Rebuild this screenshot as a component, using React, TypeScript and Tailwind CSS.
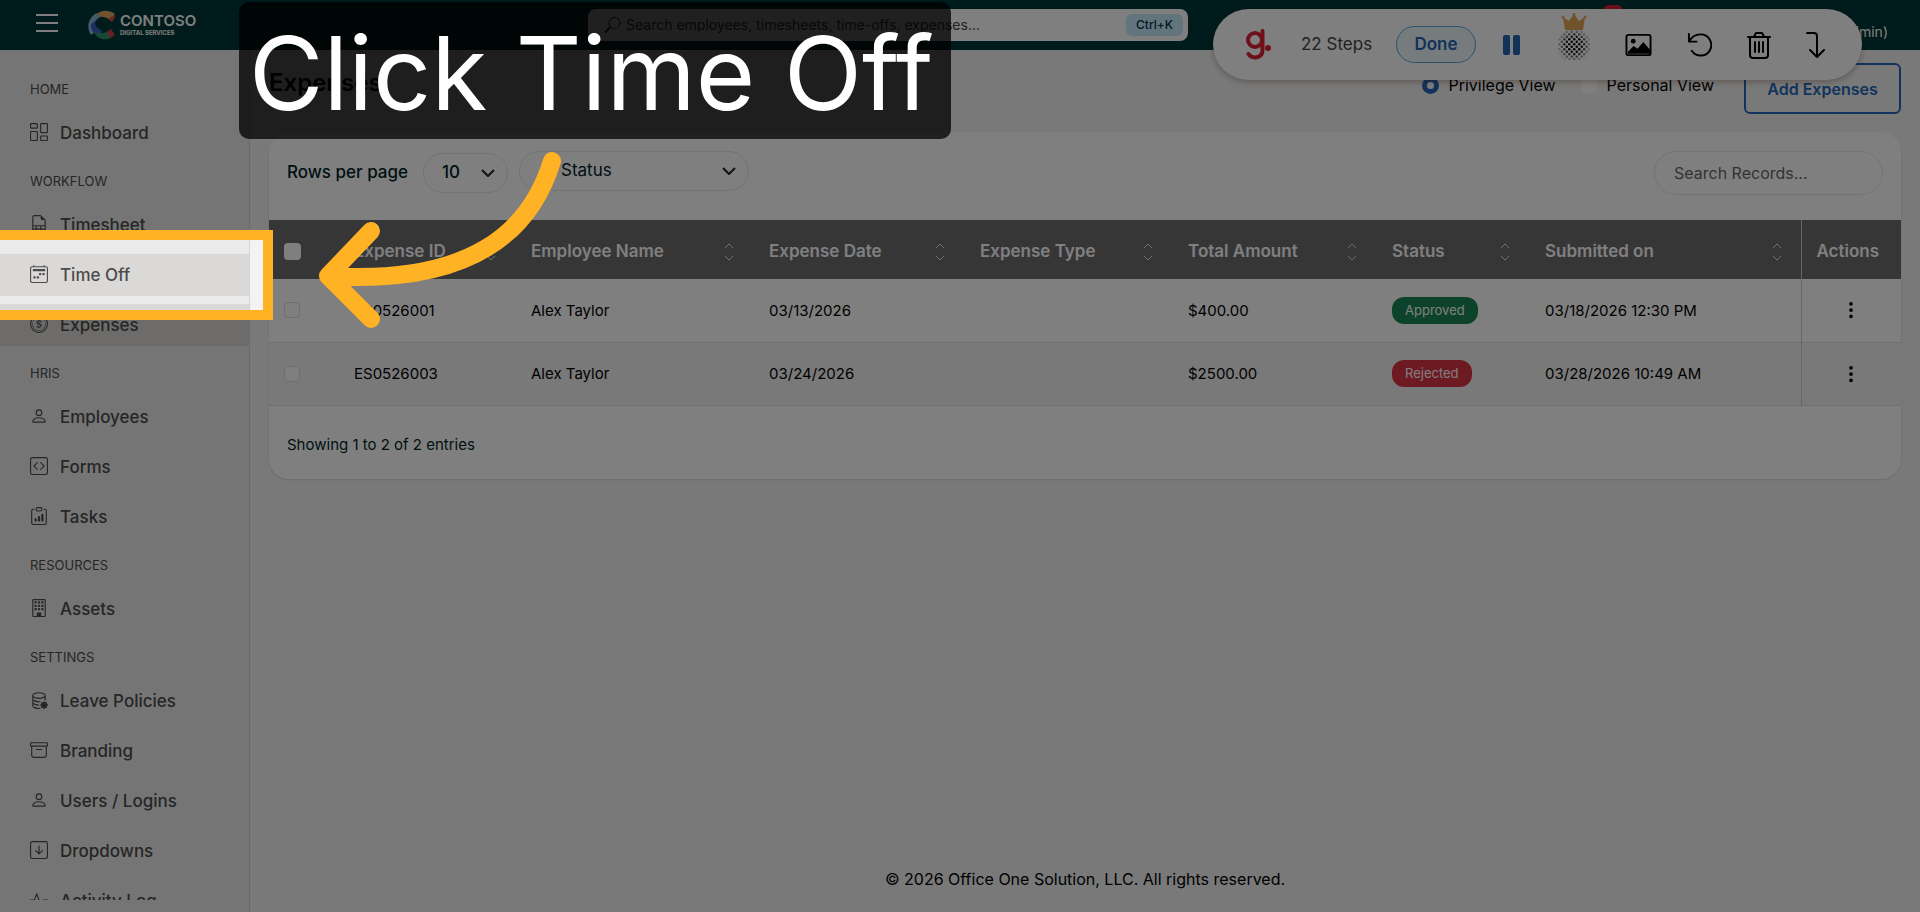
import type { ReactNode } from "react"
import type { IconType } from "react-icons"
import {
  BsActivity,
  BsArchive,
  BsArrowDownSquare,
  BsBuilding,
  BsCalendar2Week,
  BsClipboardData,
  BsCodeSquare,
  BsCoin,
  BsColumnsGap,
  BsDatabaseGear,
  BsFileEarmarkSpreadsheet,
  BsPerson,
  BsThreeDotsVertical,
} from "react-icons/bs"

interface NavItem {
  label: string
  icon: IconType
  state?: "active" | "hover"
}

interface NavSection {
  title: string
  items: NavItem[]
}

interface Expense {
  id: string
  employee: string
  date: string
  amount: string
  status: "Approved" | "Rejected"
  submitted: string
}

const sections: NavSection[] = [
  { title: "HOME", items: [{ label: "Dashboard", icon: BsColumnsGap }] },
  {
    title: "WORKFLOW",
    items: [
      { label: "Timesheet", icon: BsFileEarmarkSpreadsheet },
      { label: "Time Off", icon: BsCalendar2Week, state: "hover" },
      { label: "Expenses", icon: BsCoin, state: "active" },
    ],
  },
  {
    title: "HRIS",
    items: [
      { label: "Employees", icon: BsPerson },
      { label: "Forms", icon: BsCodeSquare },
      { label: "Tasks", icon: BsClipboardData },
    ],
  },
  { title: "RESOURCES", items: [{ label: "Assets", icon: BsBuilding }] },
  {
    title: "SETTINGS",
    items: [
      { label: "Leave Policies", icon: BsDatabaseGear },
      { label: "Branding", icon: BsArchive },
      { label: "Users / Logins", icon: BsPerson },
      { label: "Dropdowns", icon: BsArrowDownSquare },
      { label: "Activity Log", icon: BsActivity },
    ],
  },
]

const columns = [
  { label: "Expense ID", width: "w-[177px]" },
  { label: "Employee Name", width: "w-[238px]" },
  { label: "Expense Date", width: "w-[211px]" },
  { label: "Expense Type", width: "w-[208px]" },
  { label: "Total Amount", width: "w-[204px]" },
  { label: "Status", width: "w-[153px]" },
  { label: "Submitted on", width: "" },
]

const expenses: Expense[] = [
  {
    id: "ES0526001",
    employee: "Alex Taylor",
    date: "03/13/2026",
    amount: "$400.00",
    status: "Approved",
    submitted: "03/18/2026 12:30 PM",
  },
  {
    id: "ES0526003",
    employee: "Alex Taylor",
    date: "03/24/2026",
    amount: "$2500.00",
    status: "Rejected",
    submitted: "03/28/2026 10:49 AM",
  },
]

function Logo() {
  return (
    <a href="#" aria-label="Contoso Digital Services" className="flex items-center gap-1">
      <svg viewBox="0 0 28 30" className="h-[30px] w-7">
        <path d="M6 8C9 1 19-2 27 4L22 10C17 6 12 6 6 8z" fill="#e2a45c" />
        <path d="M9 3C0 7-2 18 3 25L8 21C5 16 6 10 12 7z" fill="#8db4de" />
        <path d="M3 14C2 20 7 26 14 26L13 20C9 19 7 15 7 11z" fill="#3b63c0" />
        <path d="M6 22C9 30 19 31 24 27L20 21C16 24 11 24 6 22z" fill="#2f9464" />
        <path d="M19 22L23 19 27 25Q25 27 22 28z" fill="#d23c48" />
        <path d="M20 9L27 5Q27 9 24 12z" fill="#d2503c" />
      </svg>
      <span className="flex flex-col text-white">
        <span className="text-[15px] leading-4 font-semibold">CONTOSO</span>
        <span className="text-[6px] leading-2 font-bold">DIGITAL SERVICES</span>
      </span>
    </a>
  )
}

function Header() {
  return (
    <header className="flex h-[50px] shrink-0 items-center bg-[#003637] pr-8 pl-9">
      <button aria-label="Toggle menu" className="pb-1 text-white">
        <svg viewBox="0 0 22 20" className="h-5 w-[22px]" stroke="currentColor" strokeWidth="2">
          <path d="M0 2h22M0 10h22M0 18h22" />
        </svg>
      </button>
      <div className="ml-[30px] w-[500px]">
        <Logo />
      </div>
      <div className="flex h-8 w-[600px] items-center rounded-lg bg-white pr-[5px] pl-4">
        <svg viewBox="0 0 18 18" className="size-[18px] text-[#333]" fill="none" stroke="currentColor">
          <circle cx="10.500" cy="7" r="5.500" />
          <path d="M6.500 11L1 16.500" strokeWidth="2" />
        </svg>
        <input
          aria-label="Search"
          placeholder="Search employees, timesheets, time-offs, expenses..."
          className="ml-1 min-w-0 flex-1 text-sm outline-none placeholder:text-[#444]"
        />
        <kbd className="rounded-md bg-[#c6eaf8] px-[10px] font-[Inter,sans-serif] text-xs leading-[22px] font-medium text-[#04304a]">
          Ctrl+K
        </kbd>
      </div>
      <span className="ml-auto pt-3.5 text-sm text-white">(Admin)</span>
    </header>
  )
}

function Sidebar() {
  return (
    <nav className="w-[250px] shrink-0 overflow-hidden border-r border-[#d4d4d4] bg-[#ebebeb] pt-[17px]">
      <div className="h-[833px] overflow-hidden">
        {sections.map((section) => (
          <div key={section.title} className="pb-[5px]">
            <h2 className="pl-[30px] text-[13px] leading-[45px] text-[#4c4c4c]">{section.title}</h2>
            <div className="flex flex-col gap-2">
              {section.items.map((item) => (
                <a
                  key={item.label}
                  href="#"
                  className={`flex h-[42px] items-center gap-3 pt-0.5 pl-[30px] text-[17px] font-medium text-[#4c4c4c] ${
                    item.state ? "bg-[#dad9d7]" : ""
                  }`}
                >
                  <item.icon className="mb-1 size-[18px]" />
                  {item.label}
                </a>
              ))}
            </div>
          </div>
        ))}
      </div>
    </nav>
  )
}

function Select({ label, className, children }: { label: string; className: string; children: ReactNode }) {
  return (
    <div className="relative">
      <select
        aria-label={label}
        className={`h-10 appearance-none rounded-full border border-[#e6e6e6] bg-white text-[17px] text-[#011f28] ${className}`}
      >
        {children}
      </select>
      <svg
        viewBox="0 0 14 8"
        className="pointer-events-none absolute top-4 right-[13px] h-2 w-3.5"
        fill="none"
        stroke="#222"
        strokeWidth="2"
      >
        <path d="M1 1l6 6 6-6" />
      </svg>
    </div>
  )
}

function SortIcon() {
  return (
    <svg viewBox="0 0 10 18" className="h-[18px] w-2.5 shrink-0" fill="none" stroke="#ddd">
      <path d="M1 5l4-4 4 4M1 13l4 4 4-4" />
    </svg>
  )
}

function ExpensesTable() {
  return (
    <table className="w-full table-fixed text-left text-[15px]">
      <thead>
        <tr className="h-[59px] bg-[#6c6c6f] text-[17px] text-white">
          <th className="w-[69px] pt-1 pl-[15px]">
            <input
              type="checkbox"
              aria-label="Select all"
              className="block size-[17px] appearance-none rounded bg-white"
            />
          </th>
          {columns.map((column) => (
            <th key={column.label} className={`pt-1 pl-4 font-semibold ${column.width}`}>
              <div className="flex items-center justify-between pr-[19px]">
                {column.label}
                <SortIcon />
              </div>
            </th>
          ))}
          <th className="w-[100px] border-l border-[#ccc] pt-1 pl-[15px] font-semibold">Actions</th>
        </tr>
      </thead>
      <tbody>
        {expenses.map((expense) => (
          <tr key={expense.id} className="h-[63px] border-b border-[#e0e0e0] even:bg-[#f2f2f2]">
            <td className="pl-[15px]">
              <input
                type="checkbox"
                aria-label={`Select ${expense.id}`}
                className="block size-4 appearance-none rounded border border-[#dcdcdc] bg-white"
              />
            </td>
            <td className="pt-0.5 pl-4">{expense.id}</td>
            <td className="pt-0.5 pl-4">{expense.employee}</td>
            <td className="pt-0.5 pl-4">{expense.date}</td>
            <td />
            <td className="pt-0.5 pl-4">{expense.amount}</td>
            <td className="pl-4">
              <span
                className={`inline-block rounded-xl px-[13px] text-[13px] leading-[27px] text-white ${
                  expense.status === "Approved" ? "bg-[#198754]" : "bg-[#dc3545]"
                }`}
              >
                {expense.status}
              </span>
            </td>
            <td className="pt-0.5 pl-4">{expense.submitted}</td>
            <td className="border-l border-[#ccc]">
              <button aria-label="Row actions" className="mx-auto block">
                <BsThreeDotsVertical className="size-5" />
              </button>
            </td>
          </tr>
        ))}
      </tbody>
    </table>
  )
}

function ViewRadio({ label, checked }: { label: string; checked?: boolean }) {
  return (
    <label className="flex h-11 items-center gap-[9px] text-base">
      <input
        type="radio"
        name="view"
        defaultChecked={checked}
        className="size-[17px] appearance-none rounded-full bg-white checked:border-[5px] checked:border-[#2468b8]"
      />
      {label}
    </label>
  )
}

function RecorderToolbar() {
  return (
    <div className="absolute top-[9px] right-[58px] flex h-[71px] w-[649px] items-center rounded-full bg-white pl-[33px] font-[Inter,sans-serif] text-black shadow-[0_2px_6px_rgba(60,30,10,0.3)]">
      <svg viewBox="4 0 26 34" className="h-[34px] w-[26px]" fill="none" stroke="#dc2032" strokeWidth="4">
        <circle cx="13" cy="12" r="7" />
        <path d="M20.500 3v19c0 9-11 9-14 4" strokeLinecap="round" />
        <circle cx="26" cy="20" r="3" fill="#dc2032" stroke="none" />
      </svg>
      <span className="ml-[29px] w-[95px] text-[17px] whitespace-nowrap text-[#444]">22 Steps</span>
      <button className="h-[37px] w-20 rounded-full border border-[#5ea3dc] bg-[#edf6fb] text-[17px] font-semibold text-[#2564b4]">
        Done
      </button>
      <button aria-label="Pause" className="mr-[37px] ml-[27px]">
        <svg viewBox="0 0 18 20" className="h-5 w-[18px]" fill="#2564b4">
          <rect width="7" height="20" rx="2" />
          <rect x="10" width="7" height="20" rx="2" />
        </svg>
      </button>
      <div className="flex items-center gap-[35px]">
        <button aria-label="Blur" className="pb-4">
          <svg viewBox="0 0 32 48" className="h-12 w-8">
            <defs>
              <pattern id="dots" width="5" height="5" patternUnits="userSpaceOnUse">
                <circle cx="1.250" cy="1.250" r="1.250" fill="#000" />
                <circle cx="3.750" cy="3.750" r="1.250" fill="#000" />
              </pattern>
              <radialGradient id="fade">
                <stop offset="0.400" stopColor="#fff" />
                <stop offset="1" stopColor="#fff" stopOpacity="0" />
              </radialGradient>
              <mask id="fadeMask">
                <circle cx="16" cy="32" r="18" fill="url(#fade)" />
              </mask>
            </defs>
            <path d="M7 17L5 4l6 4 5-7 5 7 6-4-2 13z" fill="#e5a556" />
            <circle cx="5" cy="4" r="1.500" fill="#e5a556" />
            <circle cx="16" cy="1.500" r="1.500" fill="#e5a556" />
            <circle cx="27" cy="4" r="1.500" fill="#e5a556" />
            <rect y="17" width="32" height="30" fill="url(#dots)" mask="url(#fadeMask)" />
          </svg>
        </button>
        <button aria-label="Screenshot">
          <svg viewBox="0 0 28 24" className="h-6 w-[27px]" fill="none" stroke="currentColor" strokeWidth="2">
            <rect x="1.500" y="1.500" width="25" height="21" rx="2" />
            <circle cx="8.500" cy="8" r="2.500" fill="currentColor" stroke="none" />
            <path d="M3 21v-2l6-6 4 3 6-7 7 8v4z" fill="currentColor" stroke="none" />
          </svg>
        </button>
        <button aria-label="Undo">
          <svg
            viewBox="0 0 26 26"
            className="size-[25px]"
            fill="none"
            stroke="currentColor"
            strokeWidth="2"
            strokeLinecap="round"
            strokeLinejoin="round"
          >
            <path d="M2 2v8h8M2.500 9.500C5 5 9 2.500 14 2.500a11 11 0 1 1-9 17" />
          </svg>
        </button>
        <button aria-label="Delete">
          <svg
            viewBox="0 0 24 28"
            className="h-7 w-6"
            fill="none"
            stroke="currentColor"
            strokeWidth="2"
            strokeLinecap="round"
            strokeLinejoin="round"
          >
            <path d="M1 6h22M3 6v18a3 3 0 0 0 3 3h12a3 3 0 0 0 3-3V6M7 5.500L9 2h6l2 3.500M8 11v10M12 11v10M16 11v10" />
          </svg>
        </button>
        <button aria-label="Next">
          <svg
            viewBox="0 0 20 28"
            className="h-7 w-5"
            fill="none"
            stroke="currentColor"
            strokeWidth="2"
            strokeLinecap="round"
            strokeLinejoin="round"
          >
            <path d="M1 2h7q3 0 3 3v21M4 19l7 7 7-7" />
          </svg>
        </button>
      </div>
    </div>
  )
}

export default function App() {
  return (
    <div className="relative flex h-screen flex-col overflow-hidden bg-[#f3f3f3] font-[Inter,sans-serif] text-black">
      <Header />
      <div className="flex min-h-0 flex-1">
        <Sidebar />
        <main className="flex min-w-0 flex-1 flex-col px-[19px]">
          <div className="flex h-[82px] items-start pt-[13px]">
            <h1 className="text-2xl leading-10 font-semibold">Expenses</h1>
            <div className="ml-auto flex gap-[25px]">
              <ViewRadio label="Privilege View" checked />
              <ViewRadio label="Personal View" />
            </div>
            <button className="ml-[30px] h-[51px] w-[157px] rounded-md border-2 border-[#2468b8] text-base font-semibold text-[#2468b8]">
              Add Expenses
            </button>
          </div>

          <section className="overflow-hidden rounded-[20px] bg-white shadow-[0_1px_2px_rgba(0,0,0,0.12)]">
            <div className="flex h-[88px] items-start px-[18px] pt-[19px]">
              <span className="text-[17px] leading-[42px] font-medium text-[#011f28]">Rows per page</span>
              <div className="mt-0.5 ml-[15px] font-medium">
                <Select label="Rows per page" className="w-[85px] pl-[18px]">
                  <option>10</option>
                </Select>
              </div>
              <div className="ml-[11px]">
                <Select label="Status" className="w-[230px] pl-[41px]">
                  <option>Status</option>
                </Select>
              </div>
              <input
                aria-label="Search records"
                placeholder="Search Records..."
                className="ml-auto h-11 w-[229px] rounded-full border border-[#e6e6e6] px-[19px] text-base placeholder:text-[#666]"
              />
            </div>
            <ExpensesTable />
            <p className="px-[18px] pt-[27px] pb-[22px] text-[15px] leading-6 text-[#011f28]">
              Showing 1 to 2 of 2 entries
            </p>
          </section>

          <footer className="mt-auto pb-[21px] text-center text-base leading-6">
            © 2026 Office One Solution, LLC. All rights reserved.
          </footer>
        </main>
      </div>

      <div className="absolute top-[5px] right-[297px] h-5 w-5 rounded-md bg-[#dc2032]" />
      <RecorderToolbar />

      {/* spotlight: everything outside the frame is dimmed by its shadow */}
      <div className="absolute top-[240px] left-0 h-[70px] w-[263px] shadow-[0_0_0_10px_#ffb224,0_0_0_2000px_rgba(0,0,0,0.5)]" />
      <svg
        viewBox="0 0 260 190"
        className="absolute top-[145px] left-[310px] h-[190px] w-[260px]"
        fill="none"
        stroke="#ffb224"
        strokeWidth="18"
        strokeLinecap="round"
        strokeLinejoin="round"
      >
        <path d="M242 16C220 88 160 140 18 131M61 86L18 131L61 174" />
      </svg>
      <div className="absolute top-0.5 left-[239px] flex h-[137px] w-[712px] items-center rounded-[10px] bg-black/75 pt-1 pl-2.5 text-[102px] leading-none whitespace-nowrap text-white">
        Click Time Off
      </div>
    </div>
  )
}
